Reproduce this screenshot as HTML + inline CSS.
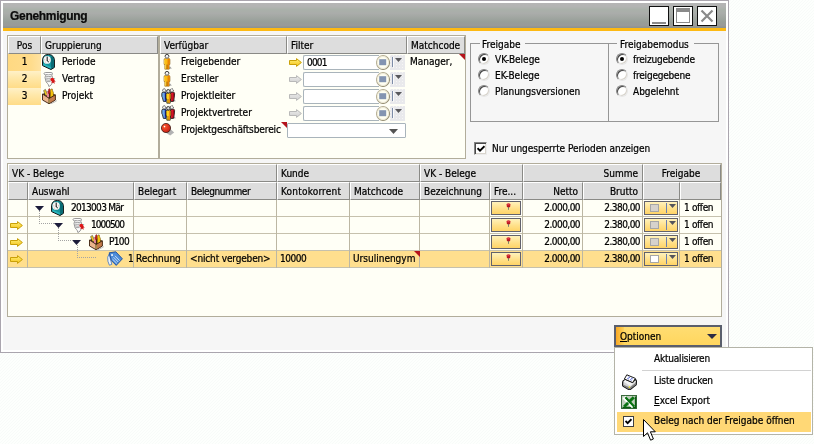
<!DOCTYPE html>
<html lang="de">
<head>
<meta charset="utf-8">
<title>Genehmigung</title>
<style>
html,body{margin:0;padding:0;}
body{width:814px;height:444px;overflow:hidden;position:relative;background:#fdfefd;
  font-family:"DejaVu Sans Condensed","DejaVu Sans","Liberation Sans",sans-serif;font-stretch:condensed;font-size:10px;color:#000;letter-spacing:0px;}
#desk{position:absolute;left:0;top:0;width:814px;height:444px;
  background:repeating-linear-gradient(135deg,#fdfffd 0,#fdfffd 1.06px,#f8fbf9 1.06px,#f8fbf9 2.1213px);}
#ui,#ui *{position:absolute;box-sizing:border-box;}
#ui u{position:static;}
#ui{left:0;top:0;width:814px;height:444px;will-change:transform;}
.t{white-space:nowrap;line-height:13px;height:13px;-webkit-text-stroke:0.22px #000;}
.hd{background:#dddddd;border-top:1px solid #fff;border-left:1px solid #fff;border-right:1px solid #8a8a86;border-bottom:1px solid #8a8a86;}
.grid{background:#fffff6;border:1px solid #b2ad9b;}
.vline{width:1px;background:#bcb7a3;}
.hline{height:1px;background:#c6c1ad;}
.inp{background:#fff;border:1px solid #a9b4bb;border-radius:2px;}
.dots{background-color:#e9e9ec;background-image:radial-gradient(circle at 0.5px 0.5px,#f6f6f4 0.6px,transparent 0.7px);background-size:3px 3px;}
.radio{width:12px;height:12px;border-radius:50%;background:#fff;border:1px solid #848484;border-right-color:#e6e6e6;border-bottom-color:#e6e6e6;box-shadow:inset 1px 1px 0 #484848,inset -1px -1px 0 #d8d4cc;}
.ybtn{background:linear-gradient(#fff2bb 0,#ffe089 55%,#ffd467 100%);border:1px solid #62626c;}
</style>
</head>
<body>
<div id="desk"></div>
<div id="ui">
<svg width="0" height="0" style="left:0;top:0">
<defs>
<linearGradient id="gy" x1="0" y1="0" x2="0" y2="1"><stop offset="0" stop-color="#fff27a"/><stop offset="1" stop-color="#f5c116"/></linearGradient>
<linearGradient id="gg" x1="0" y1="0" x2="0" y2="1"><stop offset="0" stop-color="#ececec"/><stop offset="1" stop-color="#cfcfcf"/></linearGradient>
<radialGradient id="gball" cx="0.35" cy="0.35" r="0.8"><stop offset="0" stop-color="#f86030"/><stop offset="0.5" stop-color="#e03420"/><stop offset="1" stop-color="#b01c10"/></radialGradient>
<linearGradient id="gring" x1="0" y1="0" x2="1" y2="1"><stop offset="0" stop-color="#c8c2aa"/><stop offset="1" stop-color="#8e876c"/></linearGradient>
<radialGradient id="gbtn" cx="0.5" cy="0.5" r="0.5"><stop offset="0" stop-color="#fbf9ee"/><stop offset="0.75" stop-color="#f1eedd"/><stop offset="1" stop-color="#cfc9b0"/></radialGradient>
<symbol id="arrY" viewBox="0 0 13 9"><path d="M0.5 2.5 H7.5 V0.6 L12.4 4.5 L7.5 8.4 V6.5 H0.5 Z" fill="url(#gy)" stroke="#c9a008" stroke-width="1"/></symbol>
<symbol id="arrG" viewBox="0 0 13 9"><path d="M0.5 2.5 H7.5 V0.6 L12.4 4.5 L7.5 8.4 V6.5 H0.5 Z" fill="url(#gg)" stroke="#b9b9b9" stroke-width="1"/></symbol>
<symbol id="clock" viewBox="0 0 13 16">
 <path d="M0.6 5.4 Q0.8 2.2 3.6 0.9 Q6.6 -0.1 9.4 1.1 Q12.2 2.6 12.4 5.6 V13.4 L9 15.5 L0.6 11.6 Z" fill="#15949c" stroke="#0c0c0c" stroke-width="1"/>
 <path d="M9 2.2 Q11.8 3 11.9 5.8 V13.1 L9.2 14.8 Z" fill="#0a6a72"/>
 <path d="M1.2 11.2 L8.8 14.7 V13 L1.2 9.6 Z" fill="#2bb5bc"/>
 <ellipse cx="5.1" cy="5.9" rx="3.7" ry="3.9" fill="#f6f6f4"/>
 <path d="M5.2 2.6 V7 M5.2 6.8 L6.8 8" stroke="#111" stroke-width="1" fill="none"/>
 <path d="M2.4 5.8 H3.2 M7.2 5.8 H8 M3.2 8.4 L3.8 7.9" stroke="#d08080" stroke-width="0.7"/>
</symbol>
<symbol id="doc" viewBox="0 0 13 15">
 <path d="M1 1.6 Q1.2 0.5 2.6 0.5 H8.2 Q9.6 0.5 9.4 1.8 L8.8 3.4 L9.6 5.2 L8.8 7 L9.4 9 Q9.6 11.4 8 13 Q7 14.4 5.8 14.4 Q5.6 12.4 4.4 11.4 Q2.8 10.2 2.6 8 L2 5.4 L2.6 3.6 Z" fill="#fdfdfd" stroke="#868686" stroke-width="0.85"/>
 <path d="M2.4 2.4 Q5.5 3.2 8.6 2.4 M2.8 4.2 Q5.8 5 8.8 4.2 M2.6 6 Q5.5 6.8 8.4 6 M3 7.8 Q5.8 8.6 8.6 7.8 M3.6 9.6 H7.6" stroke="#8c8c8c" stroke-width="0.8" fill="none"/>
 <circle cx="9.4" cy="7.6" r="1.9" fill="#e01818"/>
 <path d="M9 9 L8.4 11.6 L10 10.6 L11.6 12 L11.4 9.6 L12.8 9.8 L11 7.8 Z" fill="#d01414"/>
 <path d="M11.4 6.2 L12 7" stroke="#30a0a0" stroke-width="0.8"/>
</symbol>
<symbol id="box" viewBox="0 0 15 16">
 <path d="M0.5 6 L6.2 3.2 L13.4 6.8 L7.2 10.4 Z" fill="#3e220e"/>
 <path d="M1.6 2.6 L3.4 1.4 L5.6 6.6 L3.6 8 Z" fill="#f2d21c" stroke="#3c3c3c" stroke-width="0.6"/>
 <path d="M4.8 4.2 Q5.8 2.8 6.8 4.2 L7 9.6 L4.8 9.4 Z" fill="#f08a98"/>
 <path d="M6.4 1.8 L7.4 0.4 L8.2 1.8 V5.4 H6.4 Z" fill="#d81c1c" stroke="#5a0c0c" stroke-width="0.4"/>
 <path d="M8.4 2.4 L9.2 0.9 L10.4 1.1 L10.6 2.9 L11.4 4.3 L11.4 9.4 L8.2 10 Z" fill="#f6c40c" stroke="#6a4a08" stroke-width="0.5"/>
 <path d="M0.5 6 L7.2 10.4 V15.8 L0.5 12 Z" fill="#eab48c" stroke="#3a1e0c" stroke-width="0.9"/>
 <path d="M7.2 10.4 L13.4 6.8 V12 L7.2 15.8 Z" fill="#c47c4c" stroke="#3a1e0c" stroke-width="0.9"/>
 <path d="M7.2 11 V15.2" stroke="#e8e070" stroke-width="0.7"/>
 <path d="M13.8 12.2 L14.6 13 L8.4 16" fill="none" stroke="#b4b4b4" stroke-width="0.8"/>
</symbol>
<symbol id="person" viewBox="0 0 10 16">
 <path d="M5.6 14.8 L8.8 14.6 L7 12.4 Z" fill="#9c9c9c"/>
 <path d="M1 5.8 Q1 4.4 2.4 4.4 H5.6 Q7 4.4 7 5.8 V10.4 H6.2 V15.2 H1.8 V10.4 H1 Z" fill="#fbbc14" stroke="#7a4a00" stroke-width="0.5"/>
 <path d="M4.6 4.6 H5.6 Q6.8 4.6 6.8 5.8 V10.2 H6 V15 H4.4 Z" fill="#e88608"/>
 <path d="M1.6 5.6 V10 M2.4 10.4 V14.8" stroke="#fde26a" stroke-width="0.7"/>
 <path d="M4 10.6 V15" stroke="#8c4800" stroke-width="0.7"/>
 <circle cx="4" cy="2.3" r="1.9" fill="#f6f6f6" stroke="#2c2c2c" stroke-width="0.9"/>
 <path d="M2.3 3.1 A1.9 1.9 0 0 0 5.7 3.1" fill="none" stroke="#b4b4b4" stroke-width="0.9"/>
</symbol>
<symbol id="group" viewBox="0 0 15 16">
 <path d="M11.6 13.6 L14.8 13.2 L13 11 Z" fill="#9c9c9c"/>
 <path d="M0.8 5.6 Q0.8 4.2 2.2 4.2 H5 V13.4 H2.4 L1.4 9.6 L0.8 8.4 Z" fill="#6ea8e8" stroke="#101010" stroke-width="0.8"/>
 <path d="M3.7 4.6 H5 V13.2 H3.9 Z" fill="#1a28a8"/>
 <path d="M9.6 4.2 H12.2 Q13.6 4.2 13.6 5.6 L13.3 9.4 L12.4 13.4 H9.6 Z" fill="#f01830" stroke="#101010" stroke-width="0.8"/>
 <path d="M11.8 4.7 Q13.1 4.7 13.1 5.8 L12.8 9.4 L12 13 H11.4 Z" fill="#a00c18"/>
 <path d="M5 6.4 Q5 5.2 6.2 5.2 H8.6 Q9.8 5.2 9.8 6.4 V11 H9.2 V15.2 H5.8 V11 H5 Z" fill="#ffd21e" stroke="#101010" stroke-width="0.7"/>
 <path d="M8 5.6 H8.5 Q9.4 5.6 9.4 6.6 V10.8 H8.8 V14.8 H7.8 Z" fill="#f08a10"/>
 <path d="M7.3 11 V15" stroke="#a85a00" stroke-width="0.5"/>
 <circle cx="3.2" cy="2.4" r="1.6" fill="#f6f6f6" stroke="#1a1a1a" stroke-width="0.8" stroke-dasharray="1.2 0.5"/>
 <circle cx="10.8" cy="2.4" r="1.6" fill="#f6f6f6" stroke="#1a1a1a" stroke-width="0.8" stroke-dasharray="1.2 0.5"/>
 <circle cx="7.3" cy="3.2" r="1.7" fill="#dcdcdc" stroke="#1a1a1a" stroke-width="0.8"/>
</symbol>
<symbol id="ball" viewBox="0 0 14 13">
 <path d="M5 9.8 L9.6 6.2 L13.2 9.4 L9.2 12.6 Z" fill="#b2b2b2"/>
 <circle cx="5" cy="5" r="4.6" fill="url(#gball)" stroke="#2a0c06" stroke-width="0.7"/>
 <circle cx="3.5" cy="3.6" r="0.8" fill="#ffffff"/>
</symbol>
<symbol id="tag" viewBox="0 0 16 15">
 <path d="M0.7 6.2 L2.2 3 L4.8 13.4 L2.4 14.2 Q0.3 10.4 0.7 6.2 Z" fill="#eef4fd" stroke="#3c74c0" stroke-width="0.8"/>
 <path d="M2.2 1.8 L8.8 0.8 L15.4 7.8 L9.2 14.4 L4.4 9.6 Z" fill="#4d8cd8" stroke="#1c4c9c" stroke-width="0.9"/>
 <path d="M6.6 6.2 L11.2 11 M8 4.8 L12.6 9.6 M5.4 8 L9.8 12.4" stroke="#d4e6fb" stroke-width="0.9"/>
 <rect x="4.2" y="3.2" width="1.7" height="1.7" fill="#ffffff"/>
</symbol>
<symbol id="cbtn" viewBox="0 0 14 15">
 <ellipse cx="7" cy="7.5" rx="6.5" ry="7" fill="#fffff2" stroke="url(#gring)" stroke-width="1.1"/>
 <ellipse cx="7" cy="7.5" rx="5.5" ry="6" fill="none" stroke="#ece8d4" stroke-width="0.9"/>
 <rect x="3.2" y="4.2" width="7" height="6" fill="#8394b1"/>
</symbol>
<symbol id="pin" viewBox="0 0 5 8">
 <path d="M2.5 4 V6.8" stroke="#7c8468" stroke-width="1"/>
 <ellipse cx="2.5" cy="1.8" rx="2.1" ry="1.6" fill="#d02430"/>
 <rect x="0.8" y="2.6" width="3.4" height="1.6" rx="0.6" fill="#b81822"/>
 <rect x="1.7" y="0.7" width="1" height="0.9" fill="#ec6a74"/>
</symbol>
<symbol id="printer" viewBox="0 0 15 16">
 <path d="M0.7 8.6 Q0.5 7 2 6.2 L3.2 5.4 L10.8 8.6 L13.4 5.6 Q14.6 6.4 14.4 8 L14.2 10.6 L8.6 15.2 Q7.4 15.8 6.2 15.2 L1.2 12.2 Q0.5 11.6 0.6 10.6 Z" fill="#d4d4d4" stroke="#141414" stroke-width="1.2"/>
 <path d="M1.4 7.6 L3.2 6 L10.8 9.2 L13.4 6.4 L13.8 7.6 L8 12 Z" fill="#f4f4f4"/>
 <path d="M1 10.4 L7.8 13.4 L14 8.6 L14 10.5 L8.5 14.9 Q7.4 15.4 6.3 14.9 L1.4 12 Z" fill="#7e7e7e"/>
 <path d="M4.8 0.8 L13.4 4.4 L10.6 8.6 L2.4 5 Z" fill="#ffffff" stroke="#1c1c1c" stroke-width="1"/>
 <path d="M6.4 3 L7.8 3.6 M9.2 4.2 L10.6 4.8 M5.4 4.4 L6.8 5 M8.2 5.6 L9.6 6.2" stroke="#2038c8" stroke-width="0.9"/>
 <circle cx="7.4" cy="13" r="0.85" fill="#f4e81c"/>
</symbol>
<symbol id="excel" viewBox="0 0 16 14">
 <rect x="0.5" y="0.5" width="15" height="13" fill="#c2d0be" stroke="#3a6a3c" stroke-width="1"/>
 <path d="M1.5 12.5 H14.5 V1.5" fill="none" stroke="#085c0e" stroke-width="1.3"/>
 <path d="M3 2.2 L12.4 11.8" stroke="#ffffff" stroke-width="4"/>
 <path d="M12.8 2.2 L3.2 11.8" stroke="#0a7212" stroke-width="3"/>
 <path d="M4.4 2.2 L13.2 11.6" stroke="#0a7212" stroke-width="2.4"/>
 <path d="M2.8 2.8 L11.2 11.8" stroke="#f8fbf8" stroke-width="0.9"/>
</symbol>
</defs>
</svg>

<div style="left:0px;top:0px;width:729px;height:353px;background:#fff;border:1px solid #aaa5ae"></div>
<div style="left:3px;top:3px;width:723px;height:347px;background:#f6f6f6"></div>
<div style="left:3px;top:3px;width:723px;height:25px;background:linear-gradient(#b5b5b5 0,#b3b4b3 14%,#aab1aa 26%,#aaacaa 42%,#a1a6a1 58%,#979e98 76%,#999a99 90%,#8a928f 100%)"></div>
<div style="left:3px;top:28px;width:723px;height:3px;background:#fdb913"></div>
<div class="t" style="left:10px;top:8px;font-family:'Liberation Sans',sans-serif;font-stretch:normal;font-weight:bold;font-size:12px;letter-spacing:-0.3px;line-height:16px;height:16px;color:#0c0c0c">Genehmigung</div>
<div style="left:649px;top:6px;width:20px;height:20px;background:#fff;border:1px solid #101010"></div>
<div style="left:673px;top:6px;width:20px;height:20px;background:#fff;border:1px solid #101010"></div>
<div style="left:697px;top:6px;width:20px;height:20px;background:#fff;border:1px solid #101010"></div>
<div style="left:652px;top:22px;width:14px;height:2px;background:#8a8a8a"></div>
<div style="left:676px;top:8px;width:14px;height:15px;border:1px solid #8a8a8a;border-top-width:4px"></div>
<svg style="left:698px;top:7px" width="18" height="18"><path d="M3.5 3.5 L14.5 14.5 M14.5 3.5 L3.5 14.5" stroke="#8a8a8a" stroke-width="2.2" fill="none"/></svg>
<div class="grid" style="left:7px;top:35px;width:152px;height:124px;"></div>
<div class="hd" style="left:8px;top:36px;width:33px;height:18px;"></div>
<div class="t" style="left:8px;width:33px;text-align:center;top:39px;">Pos</div>
<div class="hd" style="left:41px;top:36px;width:117px;height:18px;"></div>
<div class="t" style="left:45px;top:39px;">Gruppierung</div>
<div style="left:8px;top:54px;width:33px;height:17px;background:linear-gradient(90deg,#ffd982 0,#ffdc8c 70%,#ffe3a2 100%)"></div>
<div style="left:8px;top:71px;width:33px;height:17px;background:linear-gradient(#fff1c8 0,#ffe8aa 40%,#ffdc88 100%)"></div>
<div style="left:8px;top:88px;width:33px;height:17px;background:linear-gradient(#fff1c8 0,#ffe8aa 40%,#ffdc88 100%)"></div>
<div class="t" style="left:8px;width:33px;text-align:center;top:55px;">1</div>
<div class="t" style="left:8px;width:33px;text-align:center;top:72px;">2</div>
<div class="t" style="left:8px;width:33px;text-align:center;top:89px;">3</div>
<svg style="left:42px;top:54px" width="13" height="16"><use href="#clock"/></svg>
<svg style="left:43px;top:72px" width="13" height="15"><use href="#doc"/></svg>
<svg style="left:42px;top:88px" width="15" height="16"><use href="#box"/></svg>
<div class="t" style="left:62px;top:55px;">Periode</div>
<div class="t" style="left:62px;top:72px;">Vertrag</div>
<div class="t" style="left:62px;top:89px;">Projekt</div>
<div class="grid" style="left:159px;top:35px;width:307px;height:124px;"></div>
<div class="hd" style="left:160px;top:36px;width:127px;height:18px;"></div>
<div class="t" style="left:164px;top:39px;">Verfügbar</div>
<div class="hd" style="left:287px;top:36px;width:120px;height:18px;"></div>
<div class="t" style="left:291px;top:39px;">Filter</div>
<div class="hd" style="left:407px;top:36px;width:58px;height:18px;"></div>
<div class="t" style="left:411px;top:39px;">Matchcode</div>
<svg style="left:163px;top:54px" width="10" height="16"><use href="#person"/></svg>
<svg style="left:163px;top:71px" width="10" height="16"><use href="#person"/></svg>
<svg style="left:161px;top:88px" width="15" height="16"><use href="#group"/></svg>
<svg style="left:161px;top:105px" width="15" height="16"><use href="#group"/></svg>
<svg style="left:161px;top:123px" width="14" height="13"><use href="#ball"/></svg>
<div class="t" style="left:181px;top:55px;">Freigebender</div>
<div class="t" style="left:181px;top:72px;">Ersteller</div>
<div class="t" style="left:181px;top:89px;">Projektleiter</div>
<div class="t" style="left:181px;top:106px;">Projektvertreter</div>
<div class="t" style="left:181px;top:123px;letter-spacing:-0.1px;">Projektgeschäftsbereic</div>
<svg style="left:281px;top:122px" width="6" height="6"><path d="M0 0 H6 V6 Z" fill="#b4141c"/></svg>
<svg style="left:289px;top:58px" width="13" height="9"><use href="#arrY"/></svg>
<div class="inp" style="left:303px;top:55px;width:76px;height:15px;border-right:0;border-radius:2px 0 0 2px"></div>
<div class="dots" style="left:390px;top:55px;width:15px;height:15px;"></div>
<svg style="left:376px;top:55px" width="14" height="15"><use href="#cbtn"/></svg>
<div style="left:392px;top:57px;width:1px;height:10px;background:#7d8ca8"></div>
<div style="left:393px;top:57px;width:1px;height:10px;background:#fbfbfb"></div>
<svg style="left:395px;top:58px" width="7" height="4"><path d="M0 0 H7 L3.5 4 Z" fill="#58585c"/></svg>
<svg style="left:289px;top:75px" width="13" height="9"><use href="#arrG"/></svg>
<div class="inp" style="left:303px;top:72px;width:76px;height:15px;border-right:0;border-radius:2px 0 0 2px"></div>
<div class="dots" style="left:390px;top:72px;width:15px;height:15px;"></div>
<svg style="left:376px;top:72px" width="14" height="15"><use href="#cbtn"/></svg>
<div style="left:392px;top:74px;width:1px;height:10px;background:#7d8ca8"></div>
<div style="left:393px;top:74px;width:1px;height:10px;background:#fbfbfb"></div>
<svg style="left:395px;top:75px" width="7" height="4"><path d="M0 0 H7 L3.5 4 Z" fill="#58585c"/></svg>
<svg style="left:289px;top:92px" width="13" height="9"><use href="#arrG"/></svg>
<div class="inp" style="left:303px;top:89px;width:76px;height:15px;border-right:0;border-radius:2px 0 0 2px"></div>
<div class="dots" style="left:390px;top:89px;width:15px;height:15px;"></div>
<svg style="left:376px;top:89px" width="14" height="15"><use href="#cbtn"/></svg>
<div style="left:392px;top:91px;width:1px;height:10px;background:#7d8ca8"></div>
<div style="left:393px;top:91px;width:1px;height:10px;background:#fbfbfb"></div>
<svg style="left:395px;top:92px" width="7" height="4"><path d="M0 0 H7 L3.5 4 Z" fill="#58585c"/></svg>
<svg style="left:289px;top:109px" width="13" height="9"><use href="#arrG"/></svg>
<div class="inp" style="left:303px;top:106px;width:76px;height:15px;border-right:0;border-radius:2px 0 0 2px"></div>
<div class="dots" style="left:390px;top:106px;width:15px;height:15px;"></div>
<svg style="left:376px;top:106px" width="14" height="15"><use href="#cbtn"/></svg>
<div style="left:392px;top:108px;width:1px;height:10px;background:#7d8ca8"></div>
<div style="left:393px;top:108px;width:1px;height:10px;background:#fbfbfb"></div>
<svg style="left:395px;top:109px" width="7" height="4"><path d="M0 0 H7 L3.5 4 Z" fill="#58585c"/></svg>
<div class="t" style="left:307px;top:56px;letter-spacing:-0.8px;">0001</div>
<div class="inp" style="left:287px;top:123px;width:119px;height:15px;border-radius:1px"></div>
<svg style="left:389px;top:129px" width="9" height="5"><path d="M0 0 H9 L4.5 5 Z" fill="#545454"/></svg>
<div class="t" style="left:410px;top:55px;">Manager,</div>
<svg style="left:459px;top:54px" width="6" height="6"><path d="M0 0 H6 V6 Z" fill="#b4141c"/></svg>
<div style="left:470px;top:43px;width:249px;height:79px;border:1px solid #969696"></div>
<div style="left:608px;top:43px;width:1px;height:79px;background:#969696"></div>
<div style="left:480px;top:36px;width:45px;height:13px;background:#f6f6f6"></div>
<div class="t" style="left:482px;top:38px;">Freigabe</div>
<div style="left:617px;top:36px;width:77px;height:13px;background:#f6f6f6"></div>
<div class="t" style="left:620px;top:38px;">Freigabemodus</div>
<div class="radio" style="left:478px;top:53px;width:12px;height:12px;"></div>
<div class="radio" style="left:478px;top:69px;width:12px;height:12px;"></div>
<div class="radio" style="left:478px;top:85px;width:12px;height:12px;"></div>
<div style="left:482px;top:57px;width:4px;height:4px;background:#000;border-radius:50%"></div>
<div class="radio" style="left:616px;top:53px;width:12px;height:12px;"></div>
<div class="radio" style="left:616px;top:69px;width:12px;height:12px;"></div>
<div class="radio" style="left:616px;top:85px;width:12px;height:12px;"></div>
<div style="left:620px;top:57px;width:4px;height:4px;background:#000;border-radius:50%"></div>
<div class="t" style="left:495px;top:53px;">VK-Belege</div>
<div class="t" style="left:495px;top:69px;">EK-Belege</div>
<div class="t" style="left:495px;top:85px;">Planungsversionen</div>
<div class="t" style="left:633px;top:53px;letter-spacing:-0.2px;">freizugebende</div>
<div class="t" style="left:633px;top:69px;letter-spacing:-0.2px;">freigegebene</div>
<div class="t" style="left:633px;top:85px;">Abgelehnt</div>
<div style="left:474px;top:142px;width:13px;height:13px;background:#fff;border:1px solid #848484;border-right-color:#ececec;border-bottom-color:#ececec;box-shadow:inset 1px 1px 0 #484848,inset -1px -1px 0 #d8d4cc"></div>
<svg style="left:477px;top:145px" width="8" height="8"><path d="M0.5 3.2 L3 5.7 L7.5 1.2" stroke="#000" stroke-width="1.9" fill="none"/></svg>
<div class="t" style="left:492px;top:142px;letter-spacing:-0.05px;">Nur ungesperrte Perioden anzeigen</div>
<div class="grid" style="left:7px;top:163px;width:715px;height:154px;"></div>
<div class="hd" style="left:8px;top:164px;width:269px;height:18px;"></div>
<div class="t" style="left:12px;top:167px;">VK - Belege</div>
<div class="hd" style="left:277px;top:164px;width:143px;height:18px;"></div>
<div class="t" style="left:281px;top:167px;">Kunde</div>
<div class="hd" style="left:420px;top:164px;width:103px;height:18px;"></div>
<div class="t" style="left:424px;top:167px;">VK - Belege</div>
<div class="hd" style="left:523px;top:164px;width:120px;height:18px;"></div>
<div class="t" style="right:176px;top:167px;">Summe</div>
<div class="hd" style="left:643px;top:164px;width:78px;height:18px;"></div>
<div class="t" style="left:642px;width:78px;text-align:center;top:167px;">Freigabe</div>
<div class="hd" style="left:8px;top:182px;width:20px;height:18px;"></div>
<div class="hd" style="left:28px;top:182px;width:106px;height:18px;"></div>
<div class="t" style="left:32px;top:185px;">Auswahl</div>
<div class="hd" style="left:134px;top:182px;width:53px;height:18px;"></div>
<div class="t" style="left:138px;top:185px;">Belegart</div>
<div class="hd" style="left:187px;top:182px;width:90px;height:18px;"></div>
<div class="t" style="left:191px;top:185px;letter-spacing:-0.4px;">Belegnummer</div>
<div class="hd" style="left:277px;top:182px;width:73px;height:18px;"></div>
<div class="t" style="left:281px;top:185px;letter-spacing:0.2px;">Kontokorrent</div>
<div class="hd" style="left:350px;top:182px;width:70px;height:18px;"></div>
<div class="t" style="left:354px;top:185px;">Matchcode</div>
<div class="hd" style="left:420px;top:182px;width:70px;height:18px;"></div>
<div class="t" style="left:424px;top:185px;">Bezeichnung</div>
<div class="hd" style="left:490px;top:182px;width:33px;height:18px;"></div>
<div class="t" style="left:494px;top:185px;">Fre...</div>
<div class="hd" style="left:523px;top:182px;width:60px;height:18px;"></div>
<div class="t" style="right:236px;top:185px;">Netto</div>
<div class="hd" style="left:583px;top:182px;width:60px;height:18px;"></div>
<div class="t" style="right:176px;top:185px;">Brutto</div>
<div class="hd" style="left:643px;top:182px;width:37px;height:18px;"></div>
<div class="hd" style="left:680px;top:182px;width:41px;height:18px;"></div>
<div style="left:8px;top:251px;width:713px;height:16px;background:#ffdf8e"></div>
<div class="hline" style="left:8px;top:216px;width:713px;height:1px;"></div>
<div class="hline" style="left:8px;top:233px;width:713px;height:1px;"></div>
<div class="hline" style="left:8px;top:250px;width:713px;height:1px;"></div>
<div class="hline" style="left:8px;top:267px;width:713px;height:1px;"></div>
<div class="vline" style="left:27px;top:200px;width:1px;height:68px;"></div>
<div class="vline" style="left:133px;top:200px;width:1px;height:68px;"></div>
<div class="vline" style="left:186px;top:200px;width:1px;height:68px;"></div>
<div class="vline" style="left:276px;top:200px;width:1px;height:68px;"></div>
<div class="vline" style="left:349px;top:200px;width:1px;height:68px;"></div>
<div class="vline" style="left:419px;top:200px;width:1px;height:68px;"></div>
<div class="vline" style="left:489px;top:200px;width:1px;height:68px;"></div>
<div class="vline" style="left:522px;top:200px;width:1px;height:68px;"></div>
<div class="vline" style="left:582px;top:200px;width:1px;height:68px;"></div>
<div class="vline" style="left:642px;top:200px;width:1px;height:68px;"></div>
<div class="vline" style="left:679px;top:200px;width:1px;height:68px;"></div>
<svg style="left:10px;top:221px" width="13" height="9"><use href="#arrY"/></svg>
<svg style="left:10px;top:238px" width="13" height="9"><use href="#arrY"/></svg>
<svg style="left:10px;top:255px" width="13" height="9"><use href="#arrY"/></svg>
<svg style="left:35px;top:206px" width="9" height="5"><path d="M0 0 H9 L4.5 5 Z" fill="#1c1c3a"/></svg>
<svg style="left:54px;top:223px" width="9" height="5"><path d="M0 0 H9 L4.5 5 Z" fill="#1c1c3a"/></svg>
<svg style="left:72px;top:240px" width="9" height="5"><path d="M0 0 H9 L4.5 5 Z" fill="#1c1c3a"/></svg>
<div style="left:39px;top:211px;width:15px;height:13px;border-left:1px dotted #a4a4a4;border-bottom:1px dotted #a4a4a4"></div>
<div style="left:58px;top:228px;width:15px;height:13px;border-left:1px dotted #a4a4a4;border-bottom:1px dotted #a4a4a4"></div>
<div style="left:77px;top:245px;width:19px;height:13px;border-left:1px dotted #a4a4a4;border-bottom:1px dotted #a4a4a4"></div>
<svg style="left:51px;top:200px" width="13" height="16"><use href="#clock"/></svg>
<svg style="left:72px;top:218px" width="13" height="15"><use href="#doc"/></svg>
<svg style="left:89px;top:234px" width="15" height="16"><use href="#box"/></svg>
<svg style="left:107px;top:251px" width="16" height="15"><use href="#tag"/></svg>
<div class="t" style="left:71px;top:201px;letter-spacing:-0.7px;">2013003 Mär</div>
<div class="t" style="left:91px;top:218px;letter-spacing:-1px;">1000500</div>
<div class="t" style="left:109px;top:235px;letter-spacing:-0.65px;">P100</div>
<div class="t" style="left:128px;top:252px;">1</div>
<div class="t" style="left:136px;top:252px;">Rechnung</div>
<div class="t" style="left:190px;top:252px;letter-spacing:-0.15px;">&lt;nicht vergeben&gt;</div>
<div class="t" style="left:280px;top:252px;letter-spacing:-0.5px;">10000</div>
<div class="t" style="left:353px;top:252px;">Ursulinengym</div>
<svg style="left:414px;top:251px" width="6" height="6"><path d="M0 0 H6 V6 Z" fill="#b4141c"/></svg>
<div class="ybtn" style="left:491px;top:201px;width:30px;height:14px;"></div>
<svg style="left:506px;top:203px" width="5" height="8"><use href="#pin"/></svg>
<div class="t" style="right:234px;top:201px;letter-spacing:-0.55px;">2.000,00</div>
<div class="t" style="right:174px;top:201px;letter-spacing:-0.55px;">2.380,00</div>
<div class="ybtn" style="left:644px;top:201px;width:34px;height:14px;"></div>
<div style="left:650px;top:204px;width:9px;height:8px;background:#d6d2cc;border:1px solid #a6a6a6"></div>
<div style="left:666px;top:203px;width:1px;height:10px;background:#6a7fb0"></div>
<svg style="left:669px;top:204px" width="7" height="4"><path d="M0 0 H7 L3.5 4 Z" fill="#54545c"/></svg>
<div class="t" style="left:684px;top:201px;letter-spacing:-0.35px;">1 offen</div>
<div class="ybtn" style="left:491px;top:218px;width:30px;height:14px;"></div>
<svg style="left:506px;top:220px" width="5" height="8"><use href="#pin"/></svg>
<div class="t" style="right:234px;top:218px;letter-spacing:-0.55px;">2.000,00</div>
<div class="t" style="right:174px;top:218px;letter-spacing:-0.55px;">2.380,00</div>
<div class="ybtn" style="left:644px;top:218px;width:34px;height:14px;"></div>
<div style="left:650px;top:221px;width:9px;height:8px;background:#d6d2cc;border:1px solid #a6a6a6"></div>
<div style="left:666px;top:220px;width:1px;height:10px;background:#6a7fb0"></div>
<svg style="left:669px;top:221px" width="7" height="4"><path d="M0 0 H7 L3.5 4 Z" fill="#54545c"/></svg>
<div class="t" style="left:684px;top:218px;letter-spacing:-0.35px;">1 offen</div>
<div class="ybtn" style="left:491px;top:235px;width:30px;height:14px;"></div>
<svg style="left:506px;top:237px" width="5" height="8"><use href="#pin"/></svg>
<div class="t" style="right:234px;top:235px;letter-spacing:-0.55px;">2.000,00</div>
<div class="t" style="right:174px;top:235px;letter-spacing:-0.55px;">2.380,00</div>
<div class="ybtn" style="left:644px;top:235px;width:34px;height:14px;"></div>
<div style="left:650px;top:238px;width:9px;height:8px;background:#d6d2cc;border:1px solid #a6a6a6"></div>
<div style="left:666px;top:237px;width:1px;height:10px;background:#6a7fb0"></div>
<svg style="left:669px;top:238px" width="7" height="4"><path d="M0 0 H7 L3.5 4 Z" fill="#54545c"/></svg>
<div class="t" style="left:684px;top:235px;letter-spacing:-0.35px;">1 offen</div>
<div class="ybtn" style="left:491px;top:252px;width:30px;height:14px;"></div>
<svg style="left:506px;top:254px" width="5" height="8"><use href="#pin"/></svg>
<div class="t" style="right:234px;top:252px;letter-spacing:-0.55px;">2.000,00</div>
<div class="t" style="right:174px;top:252px;letter-spacing:-0.55px;">2.380,00</div>
<div class="ybtn" style="left:644px;top:252px;width:34px;height:14px;"></div>
<div style="left:650px;top:255px;width:9px;height:8px;background:#ffffff;border:1px solid #a6a6a6"></div>
<div style="left:666px;top:254px;width:1px;height:10px;background:#6a7fb0"></div>
<svg style="left:669px;top:255px" width="7" height="4"><path d="M0 0 H7 L3.5 4 Z" fill="#54545c"/></svg>
<div class="t" style="left:684px;top:252px;letter-spacing:-0.35px;">1 offen</div>
<div style="left:614px;top:325px;width:108px;height:22px;background:linear-gradient(#ffdd72,#ffd65e);border:2px solid #5a5e6c"></div>
<div style="left:616px;top:327px;width:8px;height:18px;background:linear-gradient(90deg,#f9a825,#fdd35a)"></div>
<div class="t" style="left:620px;top:330px;"><u>O</u>ptionen</div>
<svg style="left:707px;top:334px" width="10" height="5"><path d="M0 0 H10 L5 5 Z" fill="#2c2c44"/></svg>
<div style="left:614px;top:347px;width:199px;height:88px;background:#fff;border:1px solid #b4b4a8"></div>
<div style="left:642px;top:370px;width:169px;height:1px;background:#d2d2d2"></div>
<div style="left:617px;top:412px;width:194px;height:20px;background:#ffd876"></div>
<div class="t" style="left:654px;top:352px;letter-spacing:-0.2px;">Aktualisieren</div>
<div class="t" style="left:654px;top:374px;letter-spacing:-0.1px;">Liste drucken</div>
<div class="t" style="left:654px;top:394px;"><u>E</u>xcel Export</div>
<div class="t" style="left:654px;top:414px;">Beleg nach der Freigabe öffnen</div>
<svg style="left:622px;top:374px" width="15" height="16"><use href="#printer"/></svg>
<svg style="left:621px;top:395px" width="16" height="14"><use href="#excel"/></svg>
<div style="left:623px;top:416px;width:11px;height:11px;background:#fff;border:1px solid #404040"></div>
<svg style="left:625px;top:418px" width="7" height="7"><path d="M0.5 3 L2.6 5.1 L6.5 1.2" stroke="#000" stroke-width="1.9" fill="none"/></svg>
<svg style="left:643px;top:419px" width="13" height="23"><path d="M0.5 0.5 V17.5 L4.5 13.8 L7.6 21.2 L10.4 20 L7.4 12.8 H12.3 Z" fill="#fff" stroke="#000" stroke-width="1"/></svg>
</div>
</body>
</html>
